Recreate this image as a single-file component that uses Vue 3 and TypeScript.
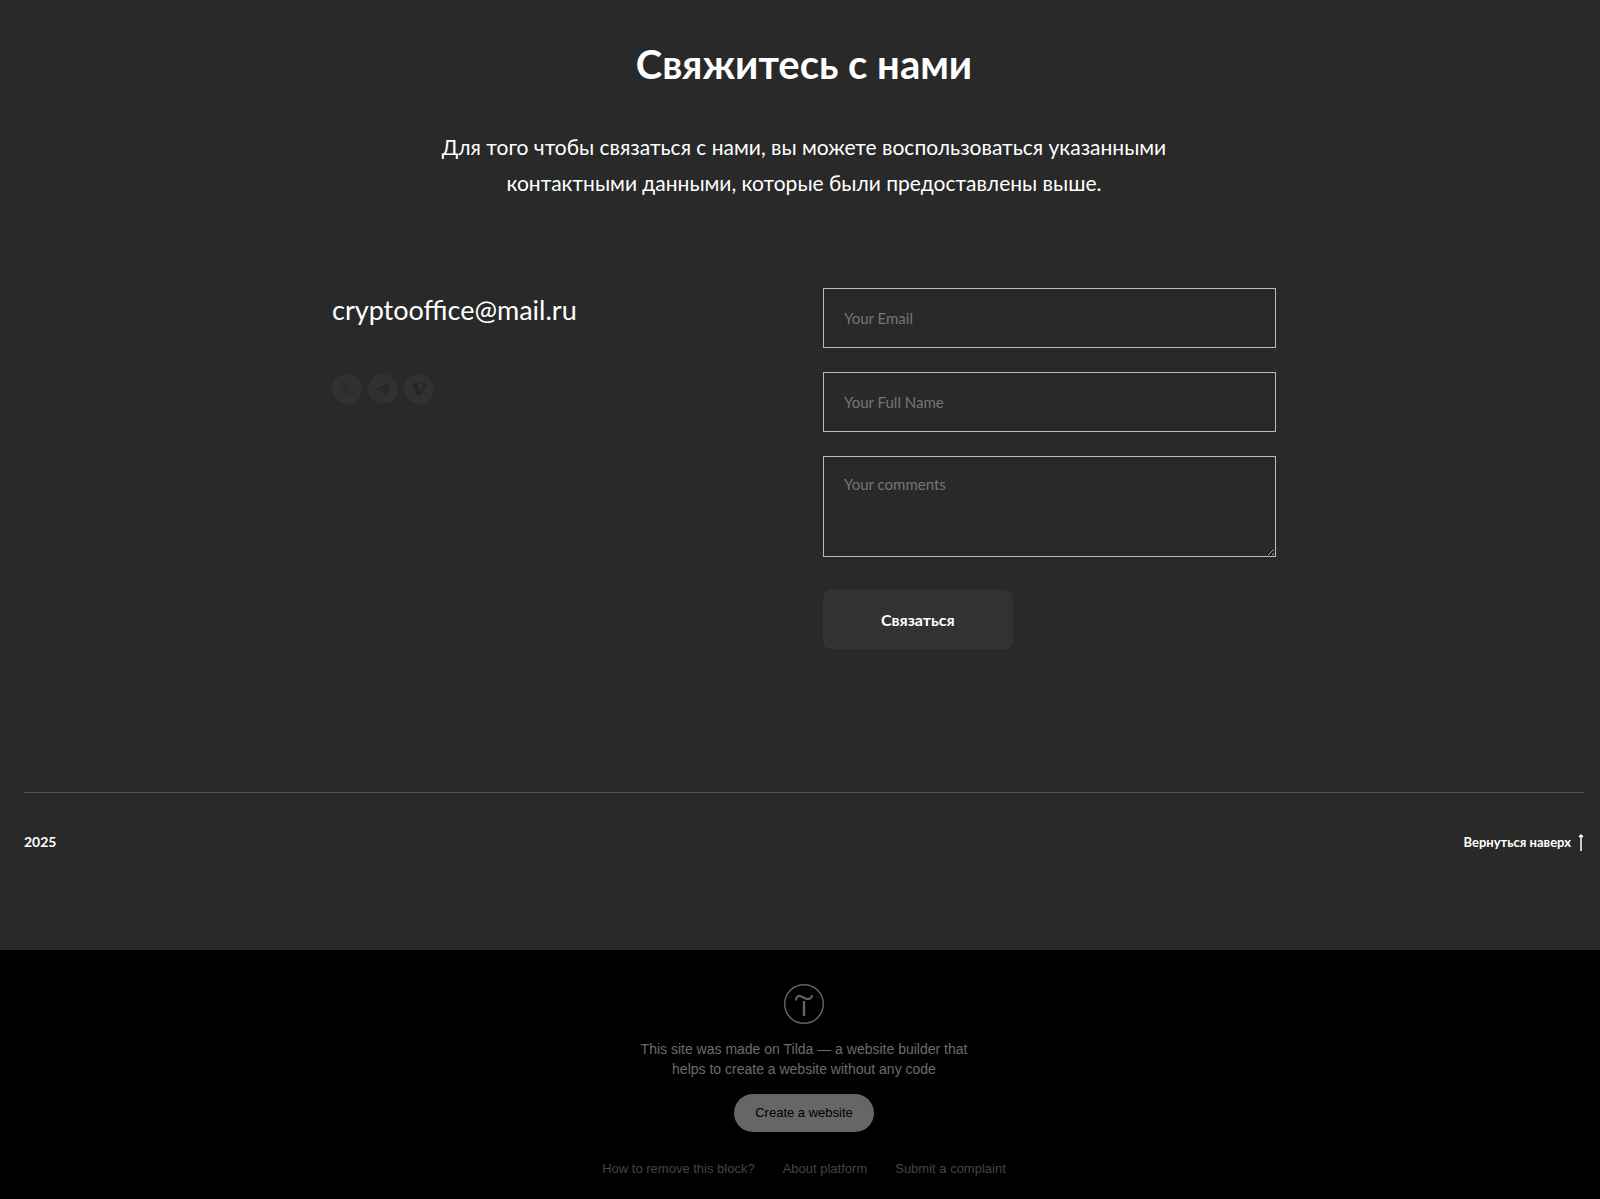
<script setup lang="ts">
import { ref } from 'vue'

interface SocialLink {
  name: string
  path: string
  fill: string
  transform?: string
}

const email = ref('')
const fullName = ref('')
const comments = ref('')

const socials: SocialLink[] = [
  {
    name: 'X',
    fill: '#292929',
    transform: 'translate(8.400 8.400) scale(0.550)',
    path: 'M18.244 2.250h3.308l-7.227 8.260 8.502 11.240H16.170l-5.214-6.817L4.990 21.750H1.680l7.730-8.835L1.254 2.250H8.080l4.713 6.231zm-1.161 17.520h1.833L7.084 4.126H5.117z',
  },
  {
    name: 'Telegram',
    fill: '#272727',
    path: 'M21.500 9.100 7 14.600c-.4.200-.4.500 0 .7l3.800 1.200 8.400-5c.3-.2.500.1.300.3l-6.300 5.900v2.100l1.800-1.500 3.800 2.800c.6.400 1.100.1 1.300-.5l2.100-10.800c.1-.6-.2-.9-.7-.7z',
  },
  {
    name: 'Vimeo',
    fill: '#272727',
    path: 'M22.200 11.800c-.1 1.500-1.100 3.500-3 5.900-2 2.600-3.600 3.800-5 3.800-.8 0-1.500-.8-2.100-2.300l-1.200-4.300c-.4-1.500-.9-2.300-1.400-2.300-.1 0-.5.200-1.100.7l-.7-.9c2.300-2 3.700-3.300 4.600-3.400 1.200-.1 1.900.7 2.200 2.400.6 3.500.9 4.900 1.500 4.900.4 0 1-.7 1.800-1.900.8-1.300 1.200-2.200 1.200-2.800.1-1-.3-1.600-1.200-1.600-.4 0-.8.100-1.300.3.800-1.800 2.200-2.300 3.800-2.200 1.400.1 2 1.200 1.900 3.700z',
  },
]

const scrollToTop = () => window.scrollTo({ top: 0, behavior: 'smooth' })
</script>

<template>
  <div class="page">
    <main class="contact">
      <header class="intro">
        <h1>Свяжитесь с нами</h1>
        <p>Для того чтобы связаться с нами, вы можете воспользоваться указанными контактными данными, которые были предоставлены выше.</p>
      </header>

      <div class="columns">
        <section class="info">
          <a class="mail" href="mailto:cryptooffice@mail.ru">cryptooffice@mail.ru</a>
          <ul class="socials">
            <li v-for="item in socials" :key="item.name">
              <a href="#" :aria-label="item.name">
                <svg viewBox="0 0 30 30" width="30" height="30" aria-hidden="true">
                  <circle cx="15" cy="15" r="15" fill="#313131" />
                  <path :d="item.path" :transform="item.transform" :fill="item.fill" fill-rule="evenodd" />
                </svg>
              </a>
            </li>
          </ul>
        </section>

        <form class="form" @submit.prevent>
          <input v-model="email" type="email" placeholder="Your Email" aria-label="Your Email" />
          <input v-model="fullName" type="text" placeholder="Your Full Name" aria-label="Your Full Name" />
          <textarea v-model="comments" placeholder="Your comments" aria-label="Your comments"></textarea>
          <button type="submit">Связаться</button>
        </form>
      </div>
    </main>

    <footer class="footer">
      <span>2025</span>
      <button type="button" class="to-top" @click="scrollToTop">
        Вернуться наверх
        <svg viewBox="0 0 6 18" width="6" height="18" aria-hidden="true">
          <path d="M3 2v16M1 4l2-2 2 2" fill="none" stroke="#fff" stroke-width="1.500" />
        </svg>
      </button>
    </footer>

    <section class="builder">
      <svg viewBox="0 0 40 40" width="40" height="40" aria-hidden="true">
        <g fill="none" stroke="#666">
          <circle cx="20" cy="20" r="19.300" stroke-width="1.400" />
          <path d="M12 16.500c0-3 1.400-4.700 3.900-4.400 2.800.300 4.900 2.900 7.900 2.900 2.300 0 4-1.200 4.300-3.800" stroke-width="2" />
          <path d="M20 17v15" stroke-width="2.400" />
        </g>
      </svg>
      <p>This site was made on Tilda — a website builder that helps to create a website without any code</p>
      <a class="create" href="#">Create a website</a>
      <nav>
        <a href="#">How to remove this block?</a>
        <a href="#">About platform</a>
        <a href="#">Submit a complaint</a>
      </nav>
    </section>
  </div>
</template>

<style>
body {
  margin: 0;
  background: #000;
}
</style>

<style scoped>
.page {
  background: #292929;
  color: #fff;
  font-family: Lato, 'Open Sans', sans-serif;
}

.contact,
.footer,
.builder {
  padding-left: 24px;
  padding-right: 16px;
}

.contact {
  padding-top: 36px;
  padding-bottom: 143px;
}

.intro {
  max-width: 760px;
  margin: 0 auto;
  text-align: center;
}

h1 {
  margin: 0;
  font-size: 40px;
  line-height: 56px;
  font-weight: 700;
}

.intro p {
  margin: 37px 0 0;
  font-size: 21px;
  line-height: 36px;
}

.columns {
  display: grid;
  grid-template-columns: 1fr 1fr;
  gap: 38px;
  max-width: 944px;
  margin: 87px auto 0;
}

.mail {
  display: block;
  color: #fff;
  font-size: 27px;
  line-height: 44px;
  text-decoration: none;
}

.socials {
  display: flex;
  gap: 6px;
  margin: 42px 0 0;
  padding: 0;
  list-style: none;
}

.socials a,
.socials svg {
  display: block;
}

.form {
  display: flex;
  flex-direction: column;
}

.form input,
.form textarea {
  box-sizing: border-box;
  width: 100%;
  height: 60px;
  margin: 0 0 24px;
  padding: 0 20px;
  border: 1px solid #bbb;
  border-radius: 0;
  outline: none;
  background: transparent;
  color: #fff;
  font: 15px/24px Lato, 'Open Sans', sans-serif;
}

.form textarea {
  height: 101px;
  margin-bottom: 33px;
  padding-top: 15px;
  resize: vertical;
}

.form ::placeholder {
  color: #757575;
  opacity: 1;
}

.form button {
  align-self: flex-start;
  height: 59px;
  padding: 0 58px;
  border: 0;
  border-radius: 8px;
  background: #323232;
  color: #fff;
  font: 700 16px/24px Lato, 'Open Sans', sans-serif;
}

.footer {
  display: flex;
  justify-content: space-between;
  align-items: center;
  position: relative;
  height: 158px;
  box-sizing: border-box;
  padding-bottom: 58px;
  font-size: 14px;
  line-height: 20px;
  font-weight: 700;
}

.footer::before {
  content: '';
  position: absolute;
  top: 0;
  left: 24px;
  right: 16px;
  height: 1px;
  background: #555;
}

.to-top {
  display: flex;
  align-items: center;
  gap: 7px;
  padding: 0;
  border: 0;
  background: none;
  color: inherit;
  font: inherit;
  font-size: 13px;
}

.builder {
  display: flex;
  flex-direction: column;
  align-items: center;
  padding-top: 34px;
  padding-bottom: 19px;
  background: #000;
  color: #6c6c6c;
  font-family: 'Liberation Sans', Arial, sans-serif;
  font-size: 14px;
  line-height: 20px;
}

.builder p {
  max-width: 340px;
  margin: 15px 0;
  text-align: center;
}

.create {
  padding: 9px 21px;
  border-radius: 20px;
  background: #666;
  color: #000;
  font-size: 13px;
  text-decoration: none;
}

.builder nav {
  display: flex;
  gap: 28px;
  margin-top: 27px;
}

.builder nav a {
  color: #444;
  font-size: 13px;
  text-decoration: none;
}
</style>
